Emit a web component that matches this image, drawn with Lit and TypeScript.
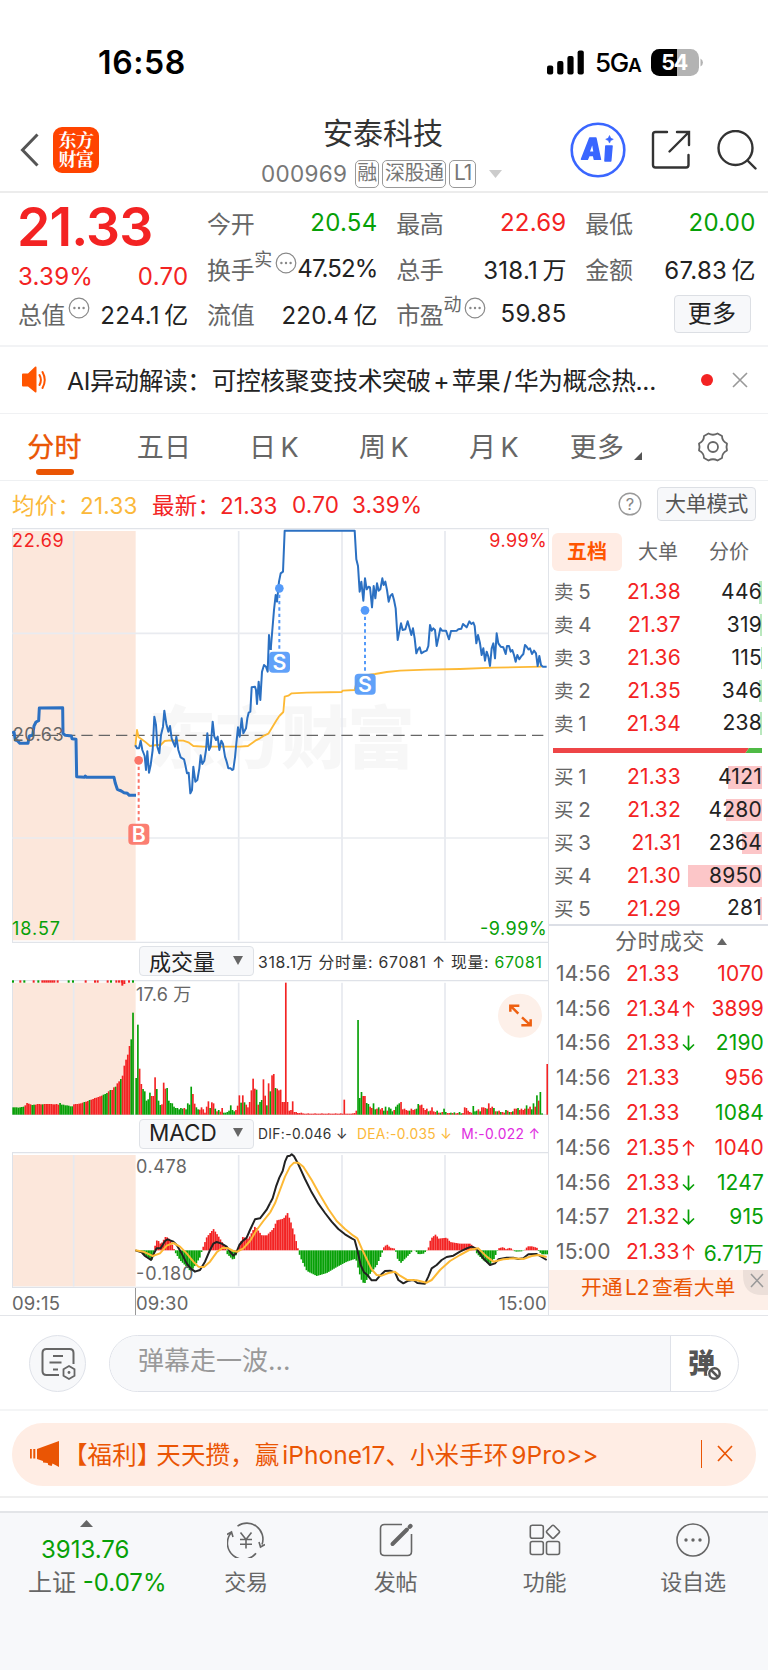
import { LitElement, html, svg, css } from "lit";
import { customElement } from "lit/decorators.js";

const RED = "#f32323";
const GREEN = "#07a007";

/* ---------- chart data (three units per pixel) ---------- */
const AUCTION = "36,640 42,636 46,660 52,662 60,670 84,670 88,648 98,646 102,618 108,606 116,602 118,564 188,563 189,640 196,646 214,648 216,656 228,658 230,770 254,772 256,768 260,772 342,772 346,790 352,808 364,813 372,818 382,820 388,826 408,826";
const PRICE_AM = "406,676 411,685 417,685 422,662 427,690 434,708 438,750 442,694 447,758 452,735 458,690 463,590 468,615 472,680 478,700 483,645 489,620 493,572 499,612 505,635 510,618 515,655 520,668 525,680 529,650 535,690 542,712 552,718 556,735 561,760 566,758 571,820 576,810 580,740 586,785 592,780 598,745 602,706 607,732 613,722 618,690 622,640 627,690 632,680 638,605 643,650 648,660 653,650 658,690 664,662 669,672 675,710 680,725 685,745 692,745 696,750 700,748 705,712 709,670 714,622 719,650 725,595 730,640 738,625 742,595 746,578 751,575 755,502 765,500 768,510 771,552 776,485 781,540 786,455 792,435 798,440 803,455 807,345 812,390";
const PRICE_PM = "92,390 97,330 102,270 107,225 111,245 117,185 122,160 129,155 134,32 344,32 349,118 354,138 359,215 364,185 370,242 375,175 380,208 386,200 390,202 396,262 401,198 406,235 411,190 416,212 421,208 427,175 431,195 436,185 441,210 446,245 451,228 457,222 462,240 467,265 473,360 478,335 483,310 488,330 496,328 503,304 508,322 514,345 519,325 524,355 529,400 534,388 539,382 544,400 552,395 560,392 565,378 570,315 575,332 580,325 585,330 590,378 596,350 601,325 606,332 618,332 627,358 633,333 650,332 655,328 664,326 669,312 680,322 688,304 694,312 700,308 704,318 709,370 714,345 720,370 725,405 730,385 735,422 740,395 745,410 750,438 755,385 760,370 765,415 770,340 775,370 782,380 790,382 797,402 801,378 807,378 812,395 817,390 822,405 827,425 832,405 838,418 843,410 850,402 855,375 860,380 865,388 870,385 876,402 882,392 888,400 893,438 898,408 903,435 908,440 920,440";
const AVG_AM = "406,680 411,630 416,652 425,658 435,665 450,678 470,675 482,675 494,663 510,661 550,662 565,667 580,678 610,680 720,680 744,678 766,662 780,655 794,646 805,641 815,625 830,600 838,588";
const AVG_PM = "118,588 130,576 134,530 145,527 155,520 200,518 305,516 308,512 344,510 352,478 375,466 405,462 440,456 480,452 560,449 660,447 760,443 905,440";
const DIF_AM = "406,946 425,952 435,963 453,975 462,955 470,940 482,940 495,918 503,913 520,920 530,930 545,955 560,985 572,1000 585,1010 600,1005 615,980 630,945 640,926 650,921 665,926 680,935 692,952 700,962 708,955 718,930 728,918 740,908 750,885 765,853 780,850 800,824 810,805";
const DIF_PM = "0,805 8,790 18,755 28,728 38,708 45,680 52,664 60,662 65,658 72,664 85,688 105,732 125,772 145,806 165,834 185,860 205,882 225,898 245,910 254,915 262,945 272,990 282,1012 292,1020 305,1036 318,1036 330,1022 345,1008 360,1007 375,1012 385,1035 400,1045 415,1037 430,1035 442,1044 465,1046 475,1025 485,1000 500,990 515,975 530,966 550,962 570,950 590,940 605,935 620,942 640,970 660,990 675,985 685,973 710,968 730,968 745,972 760,970 775,958 800,957 815,966 830,975";
const DEA_AM = "406,946 430,950 458,963 480,955 500,932 520,924 540,935 560,955 580,980 595,995 612,996 630,980 650,952 668,938 685,940 700,948 712,950 730,940 750,918 770,885 790,858 810,833";
const DEA_PM = "0,833 15,805 30,765 45,725 60,695 72,683 85,683 100,695 125,735 150,780 175,822 200,858 225,882 250,902 262,910 275,940 290,972 305,1003 320,1020 335,1022 355,1014 375,1010 390,1022 410,1034 440,1036 470,1043 485,1035 510,1005 540,978 570,960 600,944 625,940 650,965 670,980 700,973 730,970 760,972 785,963 805,960 830,966";

/* volume bars: positive is a rising (red) minute, negative a falling (green) one */
const VOL_PRE = [-22,-22,-22,-21,-22,-23,-24,28,35,33,31,-29,-30,30,32,32,31,-31,32,32,32,32,32,31,31,32,30,-35,-30,-30,-28,-28,-27,-25,-25,31,32,32,33,34,36,-38,39,41,-44,45,47,50,51,53,55,57,-60,-62,-65,70,-74,74,82,-84,94,100,-107,117,147,165,180,206,-226,-306];
const VOL_DAY = [-110,-270,138,92,-77,-70,-42,-46,-66,56,56,112,-77,-42,-29,31,96,78,-80,-42,-35,-34,-24,-20,-20,-16,-20,-18,20,-16,-34,-30,-84,62,33,-22,-16,15,22,16,6,24,40,-20,37,34,-18,10,-14,9,20,-6,-6,-8,-12,-28,-14,-10,14,27,58,-36,58,-37,30,22,38,73,108,78,-75,30,-38,-44,106,57,-28,94,-70,118,122,-80,78,73,75,38,38,396,38,12,14,40,8,8,5,5,6,4,3,3,4,3,3,3,4,3,3,3,4,3,3,3,4,3,3,3,4,3,3,4,3,45,3,3,3,3,4,5,12,-284,-50,-68,56,56,-35,-32,24,20,-34,-16,18,-22,16,20,-12,-24,12,-22,-18,-10,14,-24,-30,-34,38,16,18,14,12,-12,18,14,16,-18,-32,28,30,20,14,18,-10,12,22,10,8,-12,6,-6,8,-18,-8,5,5,-6,5,-7,4,5,-8,-4,5,22,20,12,8,6,-26,-10,-12,16,-10,22,22,20,-18,34,20,24,-20,10,-10,12,-8,8,6,-14,12,-8,8,-10,18,18,-20,14,18,14,18,-28,18,24,-16,-34,24,-58,42,-68,-4,0,0,152];
const MACD_KEYS: number[][] = [[406,0],[420,-3],[440,-22],[458,-30],[463,5],[468,30],[475,28],[482,18],[497,42],[510,32],[520,8],[525,-6],[540,-30],[560,-50],[572,-64],[585,-45],[600,-20],[606,2],[620,40],[640,64],[655,42],[675,10],[680,-10],[700,-30],[712,-5],[716,10],[728,40],[745,35],[765,72],[785,45],[800,45],[810,55],[820,65],[830,90],[850,95],[862,112],[872,85],[885,40],[894,2],[900,-20],[920,-62],[950,-77],[980,-68],[1010,-50],[1040,-34],[1067,-25],[1072,-45],[1082,-85],[1092,-102],[1110,-70],[1130,-45],[1145,-10],[1150,8],[1160,18],[1170,8],[1185,5],[1192,-25],[1202,-38],[1220,-20],[1235,-4],[1240,2],[1247,-3],[1255,-12],[1270,-10],[1278,-2],[1285,8],[1292,35],[1307,48],[1315,35],[1340,38],[1350,25],[1380,20],[1410,20],[1425,8],[1430,-10],[1450,-30],[1470,-44],[1482,-25],[1490,-5],[1495,6],[1510,10],[1516,3],[1530,8],[1545,-4],[1565,-3],[1575,2],[1582,12],[1595,12],[1610,8],[1616,-3],[1625,-12],[1646,-12]];

const STEP = 5.16;
const bars = (list: number[], x0: number, base: number, step: number, w: number) =>
  list.map((v, i) => svg`<rect x=${x0 + i * step} y=${base - Math.abs(v)} width=${w} height=${Math.abs(v)} fill=${v > 0 ? RED : GREEN}></rect>`);

const macdBars = () => {
  const out: number[] = [];
  let k = 0;
  for (let i = 0; i < 240; i++) {
    const x = 408 + i * STEP;
    while (k < MACD_KEYS.length - 2 && MACD_KEYS[k + 1][0] < x) k++;
    const [xa, ya] = MACD_KEYS[k];
    const [xb, yb] = MACD_KEYS[k + 1];
    out.push(ya + ((yb - ya) * (x - xa)) / (xb - xa));
  }
  return out.map((v, i) => svg`<rect x=${406 + i * STEP} y=${v > 0 ? 946 - v : 946} width="5.1" height=${Math.abs(v)} fill=${v > 0 ? RED : GREEN}></rect>`);
};

const vgrid = (y1: number, y2: number) =>
  [221, 716, 1026, 1335].map((x) => svg`<line x1=${x} x2=${x} y1=${y1} y2=${y2} stroke="#e6e9ef" stroke-width="5"></line>`);

const SHARED = css`
  :host { display: block; font-family: Inter, "Noto Sans CJK SC", sans-serif; color: #222; box-sizing: border-box; }
  * { box-sizing: border-box; }
  svg { display: block; }
  .red { color: #f32323; }
  .green { color: #07a007; }
`;

const dots = html`<svg class="dots" width="22" height="22" viewBox="0 0 22 22"><circle cx="11" cy="11" r="9.8" fill="none" stroke="#888" stroke-width="1.2"/><g fill="#888"><circle cx="6.4" cy="11" r="1.2"/><circle cx="11" cy="11" r="1.2"/><circle cx="15.6" cy="11" r="1.2"/></g></svg>`;

@customElement("status-bar")
class StatusBar extends LitElement {
  static styles = [SHARED, css`
    .bar { height: 106px; padding: 37px 64px 0 98px; display: flex; justify-content: space-between; }
    .time { font-size: 32px; font-weight: 600; line-height: 50px; letter-spacing: 0.6px; color: #000; padding-top: 1px; }
    .right { display: flex; align-items: center; height: 50px; color: #000; }
    .net { font-size: 26px; font-weight: 500; margin: 0 12px 0 11px; letter-spacing: -1.2px; width: 44px; white-space: nowrap; }
    .net small { font-size: 19px; font-weight: 600; }
  `];
  render() {
    return html`<div class="bar"><div class="time">16:58</div><div class="right">
      <svg width="37" height="25" viewBox="0 0 37 25"><rect x="0" y="15.5" width="6.2" height="9" rx="2"/><rect x="10.2" y="11" width="6.2" height="13.5" rx="2"/><rect x="20.4" y="6" width="6.2" height="18.5" rx="2"/><rect x="30.6" y="0.5" width="6.2" height="24" rx="2"/></svg>
      <div class="net">5G<small>A</small></div>
      <svg width="53" height="27" viewBox="0 0 53 27"><clipPath id="c"><rect width="48" height="27" rx="8.5"/></clipPath><g clip-path="url(#c)"><rect width="48" height="27" fill="#b3b3b3"/><rect width="26" height="27"/></g><path d="M49.5 9.5a4.5 4.5 0 0 1 0 8z" fill="#b3b3b3"/><text x="23.8" y="21.2" text-anchor="middle" font-size="21.5" font-weight="700" fill="#fff" textLength="27">54</text></svg>
    </div></div>`;
  }
}

@customElement("stock-header")
class StockHeader extends LitElement {
  static styles = [SHARED, css`
    .head { height: 87px; border-bottom: 2px solid #ececec; display: grid; grid-template-columns: 262px 240px 1fr; }
    .left { display: flex; align-items: center; padding: 0 0 0 20px; height: 87px; }
    .logo { margin-left: 14px; width: 46px; height: 46px; background: #ff4400; border-radius: 9px; color: #fff; font: 700 18px/19.500px "Noto Serif CJK SC", "Noto Sans CJK SC", sans-serif; text-align: center; padding-top: 3px; letter-spacing: -0.5px; }
    .mid { padding-top: 7px; }
    .name { font-size: 30px; line-height: 40px; text-align: center; padding-left: 2px; color: #333; }
    .code { display: flex; align-items: center; height: 30px; margin-top: 6px; font-size: 22.5px; color: #777; }
    .num { width: 93px; letter-spacing: 0.3px; margin: -1px 1px 0 -1px; }
    .tag { border: 1.5px solid #999; border-radius: 5px; font-size: 20px; line-height: 24px; height: 28px; text-align: center; margin-right: 3px; width: 25px; letter-spacing: -0.5px; }
    .tag.w { width: 64px; } .tag.l { width: 27px; font-size: 21px; letter-spacing: -1px;}
    .caret { margin-left: 10px; }
    .icons { display: flex; align-items: center; height: 87px; padding-left: 68px; }
    .ai { margin-right: 25px; }
    .share { margin-right: 26px; }
  `];
  render() {
    return html`<div class="head">
      <div class="left"><svg width="19" height="34" viewBox="0 0 19 34"><path d="M17.5 1.5 2.5 17l15 15.5" fill="none" stroke="#555" stroke-width="3"/></svg><div class="logo">东方<br>财富</div></div>
      <div class="mid"><div class="name">安泰科技</div><div class="code"><span class="num">000969</span><span class="tag">融</span><span class="tag w">深股通</span><span class="tag l">L1</span><svg class="caret" width="13" height="8"><path d="M0 0h13L6.5 8z" fill="#ccc"/></svg></div></div>
      <div class="icons">
        <svg class="ai" width="56" height="56" viewBox="0 0 56 56"><circle cx="28" cy="28" r="26.3" fill="none" stroke="#3a66ff" stroke-width="2.6"/><g fill="#3a66ff" stroke="#3a66ff" stroke-linejoin="round"><path d="M19.800 16h6l4.600 21.300h-6L23.600 33.500h-4.600L17.300 37.300h-5.800z" stroke-width="1.6"/><path d="M35.800 24h6.300l-1.300 15h-5.900z" stroke-width="1.4"/><path d="m39.5 13.500 1.200 2.600 2.600 1.200-2.600 1.200-1.200 2.600-1.200-2.600-2.600-1.200 2.600-1.200z" stroke-width=".6"/></g><path d="m22.200 23.500-2.200 6h3.300z" fill="#fff"/></svg>
        <svg class="share" width="40" height="40" viewBox="0 0 40 40"><path d="M16 2H4.5Q2 2 2 4.500V35q0 2.500 2.500 2.500H35q2.500 0 2.500-2.500V25M26 2h12v13M37.500 2.500 18.500 21.500" fill="none" stroke="#333" stroke-width="2.400" stroke-linecap="round"/></svg>
        <svg width="40" height="40" viewBox="0 0 40 40"><circle cx="18.500" cy="18" r="17" fill="none" stroke="#333" stroke-width="2.400"/><path d="m30.500 30.500 8 8" stroke="#333" stroke-width="2.400" stroke-linecap="round"/></svg>
      </div></div>`;
  }
}

@customElement("quote-panel")
class QuotePanel extends LitElement {
  static styles = [SHARED, css`
    .grid { height: 154px; border-bottom: 2px solid #f2f3f5; padding: 6px 12px 0 18px; display: grid; grid-template-columns: repeat(4, 170.300px); column-gap: 18.800px; grid-template-rows: 46px 46px 45px; font-size: 24px; letter-spacing: 0.250px; }
    .cell { display: flex; justify-content: space-between; align-items: center; white-space: nowrap; }
    .k { color: #666; font-size: 24px; display: flex; align-items: center; letter-spacing: -0.4px; }
    .k sup { font-size: 18px; line-height: 18px; align-self: flex-start; margin: 0; vertical-align: baseline; }
    .dots { margin: -11px 0 0 3px; }
    .big { grid-row: 1 / 3; display: grid; grid-template-rows: 56px 1fr; }
    .price { font-size: 53.5px; font-weight: 600; line-height: 56px; letter-spacing: -0.9px; margin-left: -1px; }
    .chg { display: flex; justify-content: space-between; font-size: 24px; line-height: 32px; padding-top: 6px; }
    .tight { letter-spacing: -0.9px; }
    .more { margin: 0 5px 0 auto; width: 77px; height: 38px; border: 1.500px solid #dcdfe4; border-radius: 4px; background: #f7f8fa; text-align: center; line-height: 35px; font-size: 24px; color: #222; }
    i { font-style: normal; margin-left: 4.500px; font-size: 24px; letter-spacing: 0; }
  `];
  render() {
    return html`<div class="grid">
      <div class="big red"><div class="price">21.33</div><div class="chg"><span>3.39%</span><span>0.70</span></div></div>
      <div class="cell"><span class="k">今开</span><span class="green">20.54</span></div>
      <div class="cell"><span class="k">最高</span><span class="red">22.69</span></div>
      <div class="cell"><span class="k">最低</span><span class="green">20.00</span></div>
      <div class="cell"><span class="k">换手<sup>实</sup>${dots}</span><span class="tight">47.52%</span></div>
      <div class="cell"><span class="k">总手</span><span>318.1<i>万</i></span></div>
      <div class="cell"><span class="k">金额</span><span>67.83<i>亿</i></span></div>
      <div class="cell"><span class="k">总值${dots}</span><span>224.1<i>亿</i></span></div>
      <div class="cell"><span class="k">流值</span><span>220.4<i>亿</i></span></div>
      <div class="cell"><span class="k">市盈<sup>动</sup>${dots}</span><span>59.85</span></div>
      <div class="cell"><div class="more">更多</div></div>
    </div>`;
  }
}

@customElement("news-tabs")
class NewsTabs extends LitElement {
  static styles = [SHARED, css`
    .news { height: 67px; border-bottom: 1.500px solid #f0f1f3; display: flex; align-items: center; padding: 0 20px 0 21px; font-size: 24.700px; }
    .txt { margin: -2px 0 0 19px; width: 634px; white-space: nowrap; letter-spacing: -0.35px; }
    .txt i { font-style: normal; margin: 0 2.500px; }
    .txt .s { margin: 0; }
    .x { margin-left: 19px; }
    .tabs { height: 67px; border-bottom: 1.500px solid #eef0f2; display: flex; font-size: 27px; line-height: 67px; color: #666; }
    .tab { width: 110px; text-align: center; white-space: nowrap; position: relative; letter-spacing: 0.300px; }
    .tab.on { color: #ea5504; -webkit-text-stroke: 0.400px #ea5504; width: 109px; }
    .tab.on::after { content: ""; position: absolute; left: 36px; bottom: 5px; width: 38px; height: 6px; border-radius: 3px; background: #ea5504; }
    .tab i { font-style: normal; margin-left: 4px; }
    .tab.last { padding-left: 4px; }
    .tri { display: inline-block; margin-left: 10px; margin-bottom: -3px; }
    .gear { margin: 17px 0 0 38px; }
    .avg { height: 47px; display: flex; align-items: center; font-size: 22.500px; padding: 0 12px 1px; white-space: nowrap; letter-spacing: 0.200px; }
    .y { color: #fbb83a; width: 140px; }
    .l { width: 133px; } .n2 { width: 60px; } .q { margin: 0 15px 0 auto; }
    .n2, .n3 { padding-left: 7px; }
    .mode { width: 99px; height: 34px; border: 1.500px solid #dcdfe4; border-radius: 4px; background: #f7f8fa; font-size: 21px; line-height: 31px; text-align: center; color: #555; letter-spacing: -0.3px; }
  `];
  render() {
    return html`<div class="news">
      <svg width="27" height="28" viewBox="0 0 27 28"><path d="M1 8.500q0-1 1-1h5L14 0.800q1.500-.8 1.500.8v23.800q0 1.600-1.500.8L7 20.500H2q-1 0-1-1z" fill="#ff5500"/><path d="M18.500 9q2.800 5 0 10M21.500 6q4.500 8 0 16" fill="none" stroke="#ff5500" stroke-width="2" stroke-linecap="round"/></svg>
      <div class="txt">AI<i class="s"></i>异动解读：可控核聚变技术突破<i>+</i>苹果<i>/</i>华为概念热...</div>
      <svg width="12" height="12"><circle cx="6" cy="6" r="6" fill="#f32323"/></svg>
      <svg class="x" width="16" height="16" viewBox="0 0 16 16"><path d="m1 1 14 14M15 1 1 15" stroke="#999" stroke-width="1.600"/></svg></div>
    <div class="tabs"><div class="tab on">分时</div><div class="tab">五日</div><div class="tab">日<i>K</i></div><div class="tab">周<i>K</i></div><div class="tab">月<i>K</i></div><div class="tab last">更多<svg class="tri" width="8" height="8"><path d="M8 0v8H0z" fill="#555"/></svg></div>
      <svg class="gear" width="32" height="32" viewBox="0 0 32 32" fill="none" stroke="#666" stroke-width="1.800" stroke-linejoin="round"><path d="M11.500 2.500Q16 5 20.500 2.500L25 5q0 5 5 7.500L29.500 16l.5 3.500Q25 22 25 27l-4.500 2.500Q16 27 11.500 29.500L7 27q0-5-5-7.500L2.500 16 2 12.500Q7 10 7 5z"/><circle cx="16" cy="16" r="5"/></svg></div>
    <div class="avg"><span class="y">均价：21.33</span><span class="l red">最新：21.33</span><span class="n2 red">0.70</span><span class="n3 red">3.39%</span>
      <svg class="q" width="24" height="24" viewBox="0 0 24 24"><circle cx="12" cy="12" r="10.800" fill="none" stroke="#999" stroke-width="1.400"/><text x="12" y="18" font-size="16.500" text-anchor="middle" fill="#888">?</text></svg>
      <div class="mode">大单模式</div></div>`;
  }
}

@customElement("trend-charts")
class TrendCharts extends LitElement {
  static styles = [SHARED, css`
    :host { width: 549px; border-right: 1.500px solid #e1e4e9; padding-left: 12px; }
    .hd { height: 37px; display: flex; align-items: center; padding: 0 0 1px 127px; font-size: 15.800px; color: #333; white-space: nowrap; letter-spacing: 0.720px; }
    .sel { width: 115px; height: 30px; border: 1.500px solid #dfe2e7; border-radius: 4px; background: #f7f8fa; display: flex; align-items: center; justify-content: space-between; padding: 0 10px 2px 9px; font-size: 22px; color: #222; margin-right: 4px; letter-spacing: 0; }
    .macd { font-size: 13.800px; letter-spacing: 0.350px; padding-bottom: 0; }
    .macd .sel { font-size: 22.500px; }
    .macd span { margin-right: 9px; }
    .macd .m { color: #e02be0; margin: 0; }
    .macd .d { color: #fbb83a; }
    .times { height: 27px; display: flex; justify-content: space-between; font-size: 18.500px; line-height: 30px; color: #666; padding-right: 1px; letter-spacing: 0.2px; }
    .t1 { width: 124px; border-right: 1.500px solid #999; }
    .t2 { flex: 1; }
  `];
  render() {
    const line = (p: string, c: string, w: number, dx = 0) => svg`<polyline points=${p} transform="translate(${dx} 0)" fill="none" stroke=${c} stroke-width=${w} stroke-linejoin="round"></polyline>`;
    const mark = (x: number, dot: number, box: number, c: string, t: string) => svg`
      <line x1=${x} x2=${x} y1=${dot} y2=${box} stroke=${c} stroke-width="6" stroke-dasharray="10 9"></line><circle cx=${x} cy=${dot} r="13" fill=${c}></circle>
      <rect x=${x - 31} y=${box} width="63" height="63" rx="12" fill=${c} fill-opacity=".93"></rect><text x=${x} y=${box + 54} text-anchor="middle" font-size="64" font-weight="600" fill="#fff">${t}</text>`;
    return html`
    <svg width="536" height="415" viewBox="36 24 1608 1245">
      <rect x="36" y="33" width="371" height="1228" fill="#fce7db"/>
      <text x="445" y="730" font-size="203" font-weight="900" fill="#000" fill-opacity=".032" textLength="800" font-family="Noto Sans CJK SC">东方财富</text>
      ${vgrid(33, 1261)}
      <path d="M36 25.500H1644M36 1267H1644M37 25v1243" stroke="#e1e4e9" stroke-width="4" fill="none"/>
      <path d="M36 340H1644M36 954H1644" stroke="#e9ebf0" stroke-width="5"/>
      <path d="M36 646H1644" stroke="#666" stroke-width="4" stroke-dasharray="34 18"/>
      <text x="36" y="82" font-size="54" fill=${RED} textLength="155">22.69</text>
      <text x="1640" y="82" font-size="54" fill=${RED} text-anchor="end" textLength="172">9.99%</text>
      <text x="36" y="1245" font-size="54" fill=${GREEN} textLength="144">18.57</text>
      <text x="1640" y="1245" font-size="54" fill=${GREEN} text-anchor="end" textLength="200">-9.99%</text>
      ${line(AVG_AM, "#fdb935", 5.5)}${line(AVG_PM, "#fdb935", 5.5, 720)}
      ${line(AUCTION, "#2b70c2", 9)}${line(PRICE_AM, "#2b70c2", 6)}${line(PRICE_PM, "#2b70c2", 6, 720)}
      <text x="38" y="663" font-size="54" fill="#666" textLength="153">20.63</text>
      ${mark(416, 721, 911, "#fb7467", "B")}${mark(838, 205, 395, "#549af9", "S")}${mark(1095, 271, 461, "#549af9", "S")}
    </svg>
    <div class="hd"><div class="sel">成交量<svg width="10" height="9"><path d="M0 0h10L5 9z" fill="#666"/></svg></div><span>318.1万 分时量: 67081 ↑ 现量: <span class="green">67081</span></span></div>
    <svg width="536" height="135" viewBox="36 135 1608 405">
      <rect x="36" y="143" width="371" height="397" fill="#fce7db"/>
      ${vgrid(143, 540)}
      <path d="M36 137H1644M36 539H1644M37 135v404" stroke="#dfe2e8" stroke-width="4" fill="none"/>
      ${[[36,1],[58,0],[70,1],[98,0],[112,1],[124,0],[130,0],[136,0],[142,0],[148,0],[154,0],[160,0],[170,0],[203,1],[216,1],[254,0],[282,0],[290,0],[320,0],[330,1],[346,0],[354,0],[362,0],[364,0],[370,0],[384,0],[396,1]].map(([x, g]) => svg`<rect x=${x} y="136" width="6" height=${x === 364 ? 16 : x === 370 ? 11 : 7} fill=${g ? GREEN : RED}></rect>`)}
      ${bars(VOL_PRE, 37, 539, 5.21, 5.1)}${bars(VOL_DAY, 406, 539, STEP, 5)}
      <text x="408" y="197" font-size="54" fill="#666" textLength="166">17.6 万</text>
      <circle cx="1560" cy="242" r="66" fill="#fdf0e9"/>
      <path d="M1531 230v-18h27M1531 212l24 24M1592 253v18h-28M1592 271l-26-24" fill="none" stroke="#ee6011" stroke-width="7.5"/>
    </svg>
    <div class="hd macd"><div class="sel">MACD<svg width="10" height="9"><path d="M0 0h10L5 9z" fill="#666"/></svg></div><span>DIF:-0.046 ↓</span><span class="d">DEA:-0.035 ↓</span><span class="m">M:-0.022 ↑</span></div>
    <svg width="536" height="136" viewBox="36 651 1608 408">
      <rect x="36" y="660" width="371" height="394" fill="#fce7db"/>
      ${vgrid(660, 1054)}
      <path d="M36 653H1644M36 1057H1644M37 652v405" stroke="#dfe2e8" stroke-width="4" fill="none"/>
      ${macdBars()}
      <text x="408" y="714" font-size="54" fill="#666" textLength="153">0.478</text>
      <text x="408" y="1035" font-size="54" fill="#666" textLength="172">-0.180</text>
      ${line(DIF_AM, "#222", 6)}${line(DIF_PM, "#222", 6, 810)}${line(DEA_AM, "#fdb935", 6)}${line(DEA_PM, "#fdb935", 6, 810)}
    </svg>
    <div class="times"><span class="t1">09:15</span><span class="t2">09:30</span><span>15:00</span></div>`;
  }
}

const ASKS: [string, string, string, number][] = [["卖", "5", "21.38|446", 3.5], ["卖", "4", "21.37|319", 2.5], ["卖", "3", "21.36|115", 1], ["卖", "2", "21.35|346", 3], ["卖", "1", "21.34|238", 2]];
const BIDS: [string, string, string, number][] = [["买", "1", "21.33|4121", 34], ["买", "2", "21.32|4280", 36], ["买", "3", "21.31|2364", 20], ["买", "4", "21.30|8950", 74], ["买", "5", "21.29|281", 2]];
const TRADES = [["14:56", "21.33", "", "1070", "r"], ["14:56", "21.34", "↑", "3899", "r"], ["14:56", "21.33", "↓", "2190", "g"], ["14:56", "21.33", "", "956", "r"], ["14:56", "21.33", "", "1084", "g"], ["14:56", "21.35", "↑", "1040", "r"], ["14:56", "21.33", "↓", "1247", "g"], ["14:57", "21.32", "↓", "915", "g"], ["15:00", "21.33", "↑", "6.71万", "g"]];

@customElement("order-book")
class OrderBook extends LitElement {
  static styles = [SHARED, css`
    .tabs { display: grid; grid-template-columns: 70px 72px 70px; height: 48px; padding: 5px 0 0 3px; font-size: 20px; line-height: 38px; color: #666; text-align: center; }
    .tabs .on { background: #ffece4; border-radius: 6px; color: #ff5500; font-weight: 700; height: 38px; }
    .row { display: grid; grid-template-columns: 50px 77px 1fr; height: 32.800px; align-items: center; padding: 0 6px 0 5px; font-size: 21px; line-height: 22px; letter-spacing: 0.250px; }
    .lab { color: #666; white-space: nowrap; font-size: 19.500px; letter-spacing: -0.2px; }
    .lab i { font-style: normal; margin-left: 5px; font-size: 20.500px; }
    .p { text-align: right; }
    .v { text-align: right; height: 22.500px; position: relative; z-index: 0; }
    .v s { position: absolute; right: 0; top: 0; height: 22.500px; z-index: -1; }
    .g s { background: #b9e8bd; } .r s { background: #fcc6c8; }
    .asks { height: 165px; }
    .split { display: block; margin-left: 4px; }
    .bids { height: 171px; padding-top: 8px; }
    .list { border-top: 2px solid #dcdfe6; }
    .title { font-size: 22px; color: #666; height: 30px; line-height: 30px; padding-left: 66px; display: flex; align-items: center; letter-spacing: 0.4px; }
    .title svg { margin-left: 12px; }
    .trade { display: grid; grid-template-columns: 71px 55px 15px minmax(0, 1fr); height: 34.800px; align-items: center; padding: 0 4px 0 7px; font-size: 21px; white-space: nowrap; letter-spacing: 0.150px; }
    .trade .time { color: #666; }
    .trade .c2 { display: block; margin-left: -1px; }
    .trade svg { margin-top: 1px; }
    .trade .p { display: flex; justify-content: flex-end; }
    .promo { margin-top: 0.500px; height: 40px; background: #fdefe8; display: flex; justify-content: space-between; padding-left: 32px; color: #ea5504; font-size: 20.800px; line-height: 36px; white-space: nowrap; }
    .promo i { font-style: normal; margin: 0 2.500px; }
    .x { width: 25px; height: 25px; }
  `];
  book(rows: typeof ASKS, cls: string) {
    return rows.map(([a, n, pv, w]) => html`<div class="row ${cls}"><span class="lab">${a}<i>${n}</i></span><span class="p red">${pv.split("|")[0]}</span><span class="v"><s style="width:${w}px"></s>${pv.split("|")[1]}</span></div>`);
  }
  render() {
    return html`<div class="tabs"><div class="on">五档</div><div>大单</div><div>分价</div></div>
      <div class="asks">${this.book(ASKS, "g")}</div>
      <svg class="split" width="209" height="12" viewBox="0 0 209 12"><path d="M0 7h196l-3.500 5H0z" fill="#ee4547"/><path d="M196 7h13v5h-16.500z" fill="#4fba45"/></svg>
      <div class="bids">${this.book(BIDS, "r")}</div>
      <div class="list"><div class="title">分时成交<svg width="10" height="7"><path d="M5 0 10 7H0z" fill="#666"/></svg></div>
      ${TRADES.map(([t, p, a, v, c]) => html`<div class="trade"><span class="time">${t}</span><span class="c2 red">${p}</span>
        <svg width="13" height="16" viewBox="0 0 13 16">${a ? svg`<path d=${a === "↑" ? "M6.500 15.500V1.500M1 6.500l5.500-5.300L12 6.500" : "M6.500 .5v14M1 9.500l5.500 5.300L12 9.500"} fill="none" stroke=${a === "↑" ? RED : GREEN} stroke-width="1.700"></path>` : ""}</svg>
        <span class="p ${c === "r" ? "red" : "green"}">${v}</span></div>`)}
      </div>
      <div class="promo"><span>开通<i>L2</i>查看大单</span><svg class="x" viewBox="0 0 25 25"><path d="M0 0h25v25H19Q0 25 0 5z" fill="#ecdfd9"/><path d="m8 4 12 13M20 4 8 17" stroke="#999" stroke-width="1.500"/></svg></div>`;
  }
}

@customElement("bottom-area")
class BottomArea extends LitElement {
  static styles = [SHARED, css`
    .comment { height: 96px; border-top: 1.500px solid #e3e5e9; border-bottom: 2px solid #f4f5f6; display: flex; padding: 19px 29px 0; }
    .round { width: 57px; height: 57px; border: 1.500px solid #dfe2e9; border-radius: 50%; background: #f7f8fa; margin-right: 23px; padding: 11px; }
    .pill { flex: 1; height: 57px; border: 1.500px solid #dfe2e9; border-radius: 29px; display: flex; overflow: hidden; }
    .inp { flex: 1; background: #f7f8fa; border-right: 1.500px solid #dfe2e9; padding-left: 28px; font-size: 26px; line-height: 50px; color: #999; }
    .dm { width: 67px; padding: 12px 0 0 17px; }
    .promo { margin: 12px 12px 10px; height: 63px; border-radius: 31px; background: #ffede4; color: #ea5504; display: flex; align-items: center; font-size: 24.500px; padding: 0 23px 2px 18px; white-space: nowrap; }
    .promo span { margin-left: 3px; letter-spacing: 0.080px; }
    .promo i { font-style: normal; margin-left: 3px; }
    .promo .kern { margin-left: -5px; }
    .promo .bar { width: 1.500px; height: 28px; background: #ea5504; margin: 0 15px 0 auto; }
    .gap { height: 15px; border-top: 2px solid #efefef; }
    .nav { height: 160px; background: #f7f8fa; border-top: 2px solid #e3e5e8; display: grid; grid-template-columns: 171px 150px 149px 149px 148px; font-size: 22px; color: #666; text-align: center; }
    .it { padding-top: 9px; display: flex; flex-direction: column; align-items: center; }
    .it span { margin-top: 8px; line-height: 32px; letter-spacing: -0.200px; }
    .idx { font-size: 24px; padding: 7px 0 0 23px; text-align: left; }
    .idx svg { margin-left: 56.500px; }
    .idx .v { line-height: 30px; margin: 8px 0 0 18px; letter-spacing: 0; }
    .idx .s { line-height: 35px; white-space: nowrap; padding-left: 5px; }
  `];
  render() {
    const ic = (body: unknown) => html`<svg width="38" height="36" viewBox="0 0 38 36" fill="none" stroke="#666" stroke-width="1.600">${body}</svg>`;
    return html`<div class="comment"><div class="round"><svg width="36" height="34" viewBox="0 0 36 34" fill="none" stroke="#666" stroke-width="2"><path d="M18 28H5.500Q1.500 28 1.500 24V6q0-4 4-4h23q4 0 4 4v11M12 9h10M8.500 15.500h12M12 22.500h5"/><path d="m28 19 5.500 3.300v6.400L28 32l-5.500-3.300v-6.400z" stroke-width="1.800"/><circle cx="28" cy="25.500" r="1.400" fill="#666" stroke="none"/></svg></div>
      <div class="pill"><div class="inp">弹幕走一波...</div><div class="dm"><svg width="36" height="36" viewBox="0 0 36 36"><text x="0" y="25" font-size="27" font-weight="900" fill="#555">弹</text><circle cx="26.500" cy="25.500" r="7.500" fill="#fff"/><circle cx="26.500" cy="25.500" r="5.200" fill="none" stroke="#555" stroke-width="2.500"/><path d="m23 22 7 7" stroke="#555" stroke-width="2.500"/></svg></div></div></div>
    <div class="promo"><svg width="30" height="26" viewBox="0 0 30 26" fill="#ea5504"><path d="M29 0v26l-6.500-3.500-.8 2.500-3.500-1-.5-2-4.700-.5V20l-6-2V8z"/><path d="M0 8h1.800v9.500H0zM3.300 8h2v9.500h-2z"/></svg><span>【福利】<i class="kern">天天攒，赢</i><i>iPhone17、小米手环</i><i>9Pro>></i></span><div class="bar"></div><svg width="16" height="17" viewBox="0 0 16 17"><path d="m1 1 14 15M15 1 1 16" stroke="#ea5504" stroke-width="1.700"/></svg></div>
    <div class="gap"></div>
    <div class="nav"><div class="idx"><svg width="13" height="7"><path d="M6.500 0 13 7H0z" fill="#666"/></svg><div class="v green">3913.76</div><div class="s">上证 <span class="green">-0.07%</span></div></div>
      <div class="it">${ic(svg`<path d="M10.500 4.200A16 16 0 0 1 35 22.500M29 31.300A16 16 0 0 1 4 11M0 12.500 4.500 10 6 15M38 22.500 33.500 25 32 20"/><path d="m13.500 10.500 5.500 7 5.500-7M19 17.500v9M13 17.500h12M13 22.200h12"/>`)}<span>交易</span></div>
      <div class="it">${ic(svg`<path d="M25 2.500H7.500q-4 0-4 4v23q0 4 4 4h23q4 0 4-4V12"/><path d="M15.500 22 30 7.500" stroke-width="4" stroke-linecap="round"/><path d="m32.800 4.800.7-.7" stroke-width="4.200" stroke-linecap="round"/>`)}<span>发帖</span></div>
      <div class="it">${ic(svg`<rect x="4.300" y="3.300" width="13" height="13" rx="2"/><rect x="4.300" y="19.500" width="13" height="13" rx="2"/><rect x="20.500" y="19.500" width="13" height="13" rx="2"/><rect x="22" y="4.800" width="10" height="10" rx="1.500" transform="rotate(45 27 9.800)"/>`)}<span>功能</span></div>
      <div class="it">${ic(svg`<circle cx="19" cy="18" r="16"/><g fill="#666" stroke="none"><circle cx="12" cy="18" r="1.700"/><circle cx="19" cy="18" r="1.700"/><circle cx="26" cy="18" r="1.700"/></g>`)}<span>设自选</span></div>
    </div>`;
  }
}

@customElement("app-root")
class AppRoot extends LitElement {
  static styles = [SHARED, css`
    :host { width: 768px; height: 1670px; background: #fff; overflow: hidden; }
    .main { display: grid; grid-template-columns: 549px 219px; height: 787px; }
    order-book { min-width: 0; }
  `];
  render() {
    return html`<status-bar></status-bar><stock-header></stock-header><quote-panel></quote-panel><news-tabs></news-tabs>
      <div class="main"><trend-charts></trend-charts><order-book></order-book></div><bottom-area></bottom-area>`;
  }
}
